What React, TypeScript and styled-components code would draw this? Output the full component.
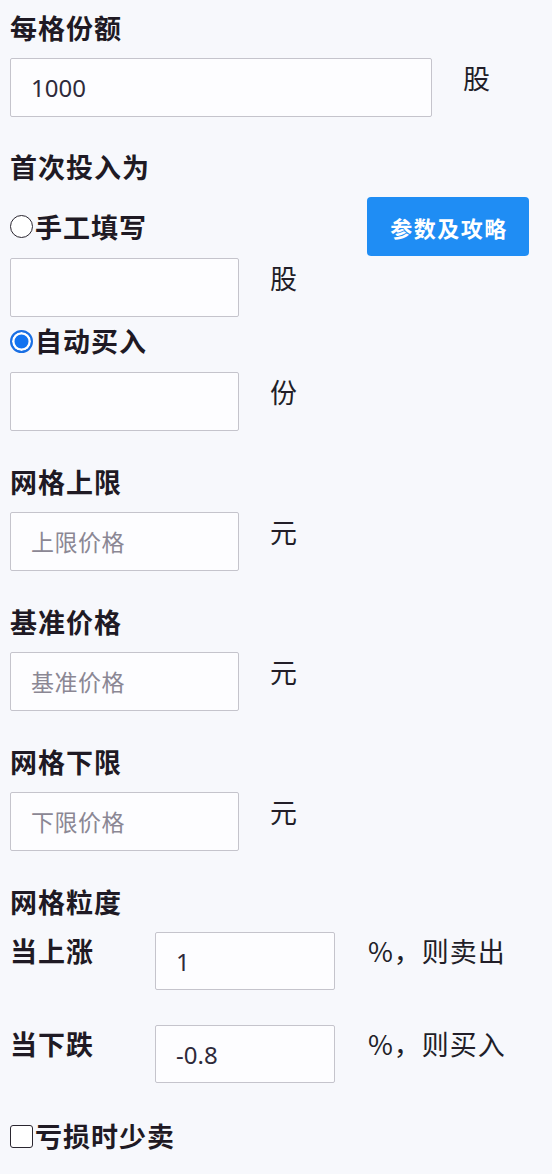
import React from 'react';
import styled, { createGlobalStyle } from 'styled-components';

const GlobalStyle = createGlobalStyle`
    html, body {
        margin: 0;
        padding: 0;
        background: #f7f8fc;
    }
    body {
        font-family: "Noto Sans CJK SC", "Noto Sans", sans-serif;
        color: #221e28;
    }
    * {
        box-sizing: border-box;
    }
`;

const Page = styled.form`
    width: 552px;
    min-height: 1174px;
    padding: 10px 23px 0 10px;
    background: #f7f8fc;
`;

const Heading = styled.div`
    font-size: 27px;
    font-weight: 700;
    line-height: 36px;
    letter-spacing: 1px;
    margin-bottom: 12px;
    color: #1f1a24;
`;

const FieldRow = styled.div<{ $gap?: number }>`
    display: flex;
    align-items: flex-start;
    margin-bottom: ${p => (p.$gap ?? 33)}px;
`;

const TextInput = styled.input<{ $width: number; $height?: number }>`
    width: ${p => p.$width}px;
    height: ${p => p.$height ?? 59}px;
    padding: 0 0 0 20px;
    border: 1px solid #c5c4cc;
    border-radius: 2px;
    background: #fdfdff;
    font-family: "Noto Sans", "Noto Sans CJK SC", sans-serif;
    font-size: 24px;
    color: #2e2a3a;
    outline: none;

    &::placeholder {
        font-family: "Noto Sans CJK SC", sans-serif;
        font-size: 23px;
        letter-spacing: 0.5px;
        color: #8b8794;
    }
`;

const Unit = styled.span<{ $left?: number; $top?: number }>`
    margin-left: ${p => p.$left ?? 31}px;
    padding-top: ${p => p.$top ?? 2}px;
    font-size: 27px;
    line-height: 36px;
    letter-spacing: 1px;
    color: #221e28;
    white-space: nowrap;
`;

const ChoiceRow = styled.div`
    display: flex;
    align-items: center;
    justify-content: space-between;
    height: 59px;
    margin-bottom: 2px;
`;

const ChoiceLine = styled.div<{ $top: number; $bottom: number }>`
    display: flex;
    margin: ${p => p.$top}px 0 ${p => p.$bottom}px;
`;

const Choice = styled.label`
    display: flex;
    align-items: center;
    font-size: 27px;
    font-weight: 700;
    line-height: 36px;
    letter-spacing: 1px;
    color: #1f1a24;
`;

const Radio = styled.input.attrs({ type: 'radio' })`
    appearance: none;
    width: 23px;
    height: 23px;
    margin: 0 2px 0 0;
    border: 1.5px solid #2a2630;
    border-radius: 50%;
    background: #ffffff;

    &:checked {
        border: 2px solid #1a6fe3;
        background: #1273f0;
        box-shadow: inset 0 0 0 2.5px #ffffff;
    }
`;

const Checkbox = styled.input.attrs({ type: 'checkbox' })`
    appearance: none;
    width: 23px;
    height: 23px;
    margin: 0 2px 0 0;
    border: 1.5px solid #2a2630;
    border-radius: 3px;
    background: #ffffff;
`;

const GuideButton = styled.button`
    width: 162px;
    height: 59px;
    padding: 0 0 0 2px;
    border: none;
    border-radius: 4px;
    background: #1f8df4;
    color: #ffffff;
    font-family: "Noto Sans CJK SC", sans-serif;
    font-size: 22px;
    font-weight: 700;
    letter-spacing: 1.5px;
`;

const RateRow = styled.div<{ $gap?: number }>`
    display: flex;
    align-items: flex-start;
    margin-bottom: ${p => (p.$gap ?? 35)}px;
`;

const RateLabel = styled.span`
    width: 145px;
    padding-top: 1px;
    font-size: 27px;
    font-weight: 700;
    line-height: 36px;
    letter-spacing: 1px;
    color: #1f1a24;
`;

interface PriceField {
    title: string;
    placeholder: string;
}

const priceFields: PriceField[] = [
    { title: '网格上限', placeholder: '上限价格' },
    { title: '基准价格', placeholder: '基准价格' },
    { title: '网格下限', placeholder: '下限价格' }
];

export default function App() {
    return (
        <>
            <GlobalStyle />
            <Page onSubmit={e => e.preventDefault()}>
                <Heading>每格份额</Heading>
                <FieldRow $gap={32}>
                    <TextInput $width={422} defaultValue="1000" />
                    <Unit>股</Unit>
                </FieldRow>

                <Heading>首次投入为</Heading>
                <ChoiceRow>
                    <Choice>
                        <Radio name="first" />
                        手工填写
                    </Choice>
                    <GuideButton type="button">参数及攻略</GuideButton>
                </ChoiceRow>
                <FieldRow $gap={0}>
                    <TextInput $width={229} />
                    <Unit>股</Unit>
                </FieldRow>
                <ChoiceLine $top={6} $bottom={13}>
                    <Choice>
                        <Radio name="first" defaultChecked />
                        自动买入
                    </Choice>
                </ChoiceLine>
                <FieldRow>
                    <TextInput $width={229} />
                    <Unit>份</Unit>
                </FieldRow>

                {priceFields.map(f => (
                    <React.Fragment key={f.title}>
                        <Heading>{f.title}</Heading>
                        <FieldRow>
                            <TextInput $width={229} placeholder={f.placeholder} />
                            <Unit>元</Unit>
                        </FieldRow>
                    </React.Fragment>
                ))}

                <Heading>网格粒度</Heading>
                <RateRow>
                    <RateLabel>当上涨</RateLabel>
                    <TextInput $width={180} $height={58} defaultValue="1" />
                    <Unit $left={33} $top={1}>%，则卖出</Unit>
                </RateRow>
                <RateRow>
                    <RateLabel>当下跌</RateLabel>
                    <TextInput $width={180} $height={58} defaultValue="-0.8" />
                    <Unit $left={33} $top={1}>%，则买入</Unit>
                </RateRow>

                <Choice>
                    <Checkbox />
                    亏损时少卖
                </Choice>
            </Page>
        </>
    );
}
